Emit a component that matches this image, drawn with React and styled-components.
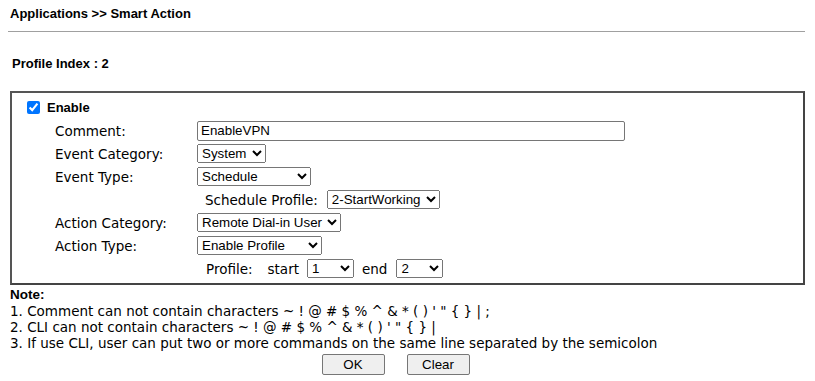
import React from "react";
import styled, { createGlobalStyle } from "styled-components";

const Global = createGlobalStyle`
  html, body { margin: 0; padding: 0; background: #fff; }
  body { font-family: "Liberation Sans", Arial, sans-serif; color: #000; }
`;

const Page = styled.div`
  width: 815px;
  padding: 6px 10px 0 8px;
  box-sizing: border-box;
`;

const Title = styled.div`
  font: bold 13px "Liberation Sans", Arial, sans-serif;
  padding-left: 2px;
  height: 19px;
  line-height: 16px;
`;

const Rule = styled.hr`
  margin: 6px 0 0 0;
  border: 0;
  border-top: 1px solid #a0a0a0;
  width: 797px;
`;

const IndexLabel = styled.div`
  font: bold 13px "Liberation Sans", Arial, sans-serif;
  margin: 24px 0 0 4px;
  height: 16px;
  line-height: 16px;
`;

const Box = styled.div`
  margin: 19px 0 0 2px;
  width: 795px;
  box-sizing: border-box;
  border: 2px solid #444;
  border-top-color: #555;
  border-left-color: #555;
  padding: 5px 0 5px 15px;
`;

const EnableRow = styled.label`
  display: flex;
  align-items: center;
  gap: 7px;
  font: bold 13px "Liberation Sans", Arial, sans-serif;
  height: 18px;
`;

const Check = styled.input`
  margin: 0;
  width: 13px;
  height: 13px;
`;

const Form = styled.div`
  display: grid;
  grid-template-columns: 142px 1fr;
  row-gap: 4px;
  padding-left: 28px;
  margin-top: 5px;
`;

const Label = styled.div`
  font: 13.5px "DejaVu Sans", Verdana, sans-serif;
  display: flex;
  align-items: center;
  height: 19px;
`;

const Field = styled.div`
  display: flex;
  align-items: center;
  grid-column: ${(p) => (p.$full ? "1 / -1" : "auto")};
  padding-left: ${(p) => p.$indent || 0}px;
  height: 19px;
  font: 13.5px "DejaVu Sans", Verdana, sans-serif;
`;

const Word = styled.span`
  margin-left: ${(p) => p.$ml || 0}px;
`;

const TextInput = styled.input`
  width: 428px;
  height: 20px;
  box-sizing: border-box;
  border: 1px solid #767676;
  border-radius: 2px;
  padding: 0 3px;
  font: 13.33px "Liberation Sans", Arial, sans-serif;
  color: #000;
  margin: 0;
`;

const Select = styled.select`
  width: ${(p) => p.$w}px;
  height: 19px;
  box-sizing: border-box;
  font: 13.33px "Liberation Sans", Arial, sans-serif;
  color: #000;
  margin: 0 0 0 ${(p) => p.$ml || 0}px;
`;

const Note = styled.div`
  margin: 1px 0 0 2px;
  font: 13.5px "DejaVu Sans", Verdana, sans-serif;
  line-height: 16px;
`;

const NoteTitle = styled.div`
  font: 13.5px "Liberation Sans", Arial, sans-serif;
  font-weight: 600;
  line-height: 17px;
`;

const Buttons = styled.div`
  display: flex;
  justify-content: center;
  gap: 22px;
  margin-top: 3px;
  padding-right: 22px;
`;

const Button = styled.button`
  width: 63px;
  height: 21px;
  font: 13.33px "Liberation Sans", Arial, sans-serif;
  background: #efefef;
  border: 1px solid #767676;
  border-radius: 2px;
  color: #000;
  padding: 0;
`;

export default function App() {
  return (
    <>
      <Global />
      <Page>
        <Title>Applications &gt;&gt; Smart Action</Title>
        <Rule />
        <IndexLabel>Profile Index : 2</IndexLabel>
        <Box>
          <EnableRow>
            <Check type="checkbox" defaultChecked />
            Enable
          </EnableRow>
          <Form>
            <Label>Comment:</Label>
            <Field>
              <TextInput defaultValue="EnableVPN" />
            </Field>
            <Label>Event Category:</Label>
            <Field>
              <Select $w={69} defaultValue="System">
                <option>System</option>
              </Select>
            </Field>
            <Label>Event Type:</Label>
            <Field>
              <Select $w={114} defaultValue="Schedule">
                <option>Schedule</option>
              </Select>
            </Field>
            <Field $full $indent={150}>
              <Word>Schedule Profile:</Word>
              <Select $w={113} $ml={9} defaultValue="2-StartWorking">
                <option>2-StartWorking</option>
              </Select>
            </Field>
            <Label>Action Category:</Label>
            <Field>
              <Select $w={144} defaultValue="Remote Dial-in User">
                <option>Remote Dial-in User</option>
              </Select>
            </Field>
            <Label>Action Type:</Label>
            <Field>
              <Select $w={125} defaultValue="Enable Profile">
                <option>Enable Profile</option>
              </Select>
            </Field>
            <Field $full $indent={151}>
              <Word>Profile:</Word>
              <Word $ml={15}>start</Word>
              <Select $w={47} $ml={8} defaultValue="1">
                <option>1</option>
              </Select>
              <Word $ml={8}>end</Word>
              <Select $w={47} $ml={9} defaultValue="2">
                <option>2</option>
              </Select>
            </Field>
          </Form>
        </Box>
        <Note>
          <NoteTitle>Note:</NoteTitle>
          <div>1. Comment can not contain characters ~ ! @ # $ % ^ &amp; * ( ) ' " {"{"} {"}"} | ;</div>
          <div>2. CLI can not contain characters ~ ! @ # $ % ^ &amp; * ( ) ' " {"{"} {"}"} |</div>
          <div>3. If use CLI, user can put two or more commands on the same line separated by the semicolon</div>
        </Note>
        <Buttons>
          <Button>OK</Button>
          <Button>Clear</Button>
        </Buttons>
      </Page>
    </>
  );
}
